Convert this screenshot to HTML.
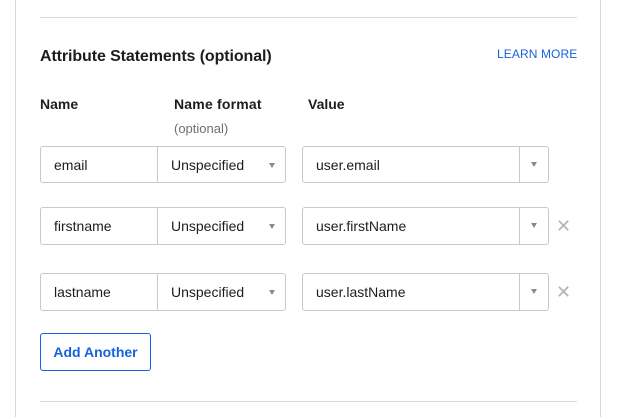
<!DOCTYPE html>
<html><head><style>
body{margin:0;width:617px;height:417px;background:#fff;font-family:"Liberation Sans",sans-serif;color:#1d1d21;position:relative;overflow:hidden}
.a{position:absolute}
.box{position:absolute;border:1px solid #c8c8cc;border-radius:3px;box-sizing:border-box;font-size:14px;display:flex;align-items:center;background:#fff}
.tri{position:absolute;width:0;height:0;border-left:3.5px solid transparent;border-right:3.5px solid transparent;border-top:5px solid #8a8a8e}
.x{position:absolute;font-size:18px;color:#b4b4b8;left:556px}
</style></head><body>
<div class="a" style="left:15px;top:0;width:586px;height:417px;border-left:1px solid #d7d7dc;border-right:1px solid #d7d7dc;box-sizing:border-box"></div>
<div class="a" style="left:40px;top:17px;width:537px;height:1px;background:#d7d7dc"></div>
<div class="a" style="left:40px;top:48px;font-size:16px;font-weight:bold;letter-spacing:-0.1px">Attribute Statements (optional)</div>
<div class="a" style="left:497px;top:47px;font-size:12px;color:#1662dd;letter-spacing:.1px">LEARN MORE</div>
<div class="a" style="left:40px;top:96px;font-size:14px;font-weight:bold">Name</div>
<div class="a" style="left:174px;top:96px;font-size:14px;font-weight:bold;letter-spacing:0.2px">Name format</div>
<div class="a" style="left:174px;top:121px;font-size:13px;color:#6e6e78">(optional)</div>
<div class="a" style="left:308px;top:96px;font-size:14px;font-weight:bold">Value</div>

<div class="box" style="left:40px;top:146px;width:118px;height:37px;padding-left:13px;border-radius:3px 0 0 3px">email</div>
<div class="box" style="left:157px;top:146px;width:129px;height:37px;padding-left:13px;border-radius:0 3px 3px 0">Unspecified<div class="tri" style="left:111px;top:16px"></div></div>
<div class="box" style="left:302px;top:146px;width:247px;height:37px;padding-left:13px">user.email<div class="a" style="left:216px;top:0;width:1px;height:35px;background:#c8c8cc"></div><div class="tri" style="left:228px;top:15px"></div></div>

<div class="box" style="left:40px;top:207px;width:118px;height:38px;padding-left:13px;border-radius:3px 0 0 3px">firstname</div>
<div class="box" style="left:157px;top:207px;width:129px;height:38px;padding-left:13px;border-radius:0 3px 3px 0">Unspecified<div class="tri" style="left:111px;top:16px"></div></div>
<div class="box" style="left:302px;top:207px;width:247px;height:38px;padding-left:13px">user.firstName<div class="a" style="left:216px;top:0;width:1px;height:36px;background:#c8c8cc"></div><div class="tri" style="left:228px;top:15px"></div></div>
<div class="x" style="top:216px">✕</div>

<div class="box" style="left:40px;top:273px;width:118px;height:38px;padding-left:13px;border-radius:3px 0 0 3px">lastname</div>
<div class="box" style="left:157px;top:273px;width:129px;height:38px;padding-left:13px;border-radius:0 3px 3px 0">Unspecified<div class="tri" style="left:111px;top:16px"></div></div>
<div class="box" style="left:302px;top:273px;width:247px;height:38px;padding-left:13px">user.lastName<div class="a" style="left:216px;top:0;width:1px;height:36px;background:#c8c8cc"></div><div class="tri" style="left:228px;top:15px"></div></div>
<div class="x" style="top:282px">✕</div>

<div class="box" style="left:40px;top:333px;width:111px;height:38px;border-color:#1662dd;justify-content:center;color:#1662dd;font-weight:bold">Add Another</div>
<div class="a" style="left:40px;top:401px;width:537px;height:1px;background:#d7d7dc"></div>
</body></html>
